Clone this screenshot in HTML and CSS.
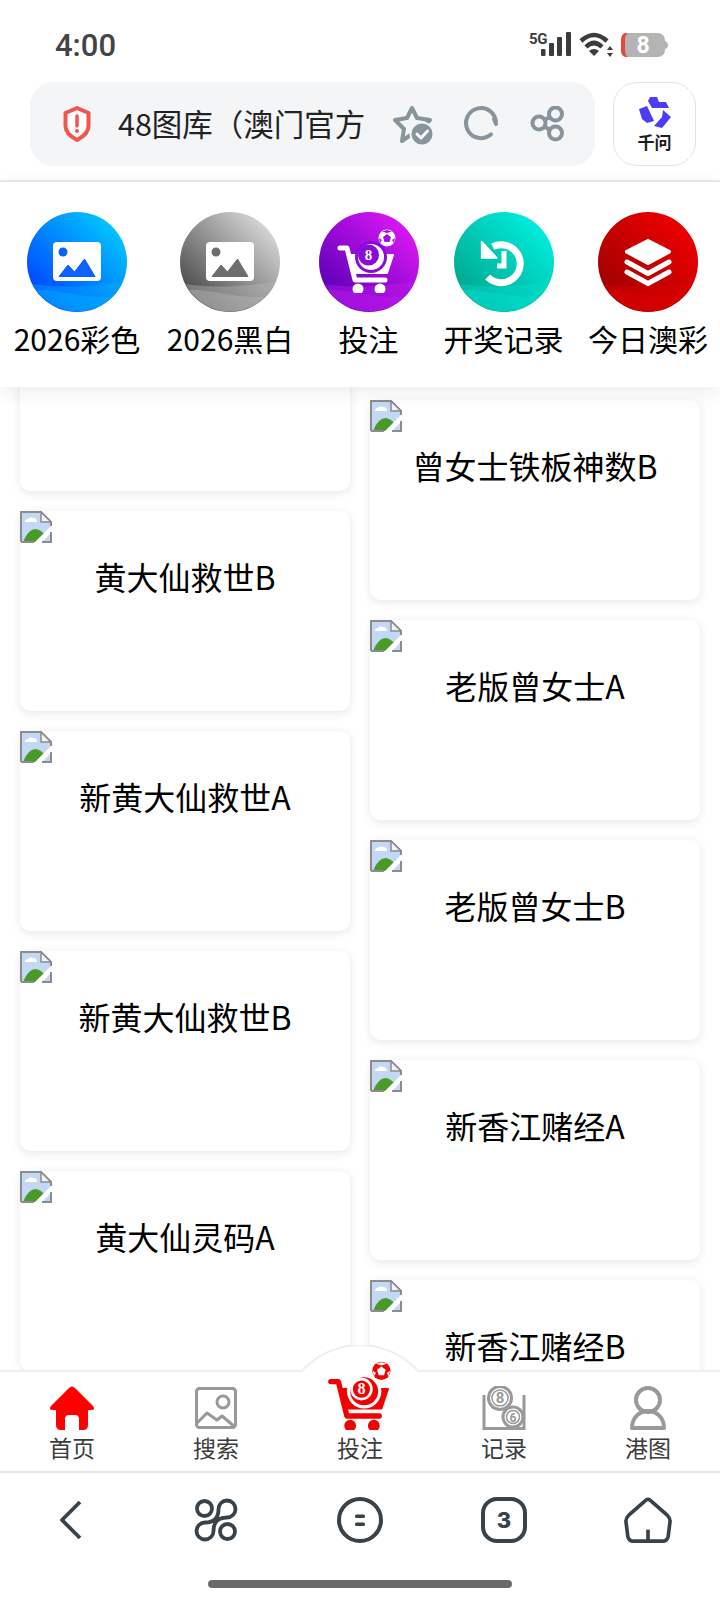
FILE: index.html
```html
<!DOCTYPE html>
<html lang="zh-CN">
<head>
  <meta charset="UTF-8">
  <meta name="viewport" content="width=device-width, initial-scale=1.0">
  <title>48图库</title>
  <link rel="stylesheet" href="styles.css">
</head>
<body>
  <!-- shared gradients and symbols -->
  <svg class="defs" aria-hidden="true">
    <defs>
      <linearGradient id="g-blue" x1="0" y1="1" x2="1" y2="0"><stop offset="0.15" stop-color="#0048ff"/><stop offset="0.9" stop-color="#00ccff"/></linearGradient>
      <linearGradient id="g-gray" x1="0" y1="1" x2="1" y2="0"><stop offset="0.15" stop-color="#4e4e4e"/><stop offset="0.9" stop-color="#dcdcdc"/></linearGradient>
      <linearGradient id="g-purple" x1="0" y1="1" x2="1" y2="0"><stop offset="0.15" stop-color="#5c00b8"/><stop offset="0.9" stop-color="#e018f5"/></linearGradient>
      <linearGradient id="g-green" x1="0" y1="1" x2="1" y2="0"><stop offset="0.15" stop-color="#00a98f"/><stop offset="0.9" stop-color="#00f0e2"/></linearGradient>
      <linearGradient id="g-red" x1="0" y1="1" x2="1" y2="0"><stop offset="0.15" stop-color="#a00000"/><stop offset="0.8" stop-color="#e80000"/></linearGradient>
      <clipPath id="disc-clip"><circle cx="50" cy="50" r="49.500"/></clipPath>

      <symbol id="waves" viewBox="0 0 100 100">
        <g clip-path="url(#disc-clip)">
          <path d="M0 71C25 76 55 76 100 69V100H0Z" fill="var(--wave)" opacity=".4"/>
          <path d="M0 78C30 76 55 86 78 85C86 85 92 84 100 80V100H0Z" fill="var(--wave)" opacity=".4"/>
        </g>
      </symbol>

      <symbol id="picture" viewBox="0 0 100 100">
        <rect x="26" y="30" width="48" height="39" rx="4" fill="#fff"/>
        <circle cx="36" cy="40" r="4.5" fill="currentColor"/>
        <path d="M32 64.5L41 53L47.500 60L57.500 47L68 64.500Z" fill="currentColor" stroke="currentColor" stroke-linejoin="round"/>
      </symbol>

      <symbol id="cart" viewBox="15 15 70 66">
        <path d="M21 36H28L36 68H66" fill="none" stroke="currentColor" stroke-width="5" stroke-linecap="round" stroke-linejoin="round"/>
        <path d="M30 43H74L68 61H36Z" fill="currentColor" stroke="currentColor" stroke-width="2" stroke-linejoin="round"/>
        <circle cx="39" cy="77" r="4" fill="currentColor" stroke="currentColor" stroke-width="3"/>
        <circle cx="61" cy="77" r="4" fill="currentColor" stroke="currentColor" stroke-width="3"/>
        <circle cx="52" cy="45" r="16" fill="var(--cut)"/>
        <circle cx="52" cy="45" r="13" fill="currentColor"/>
        <circle cx="49.500" cy="43" r="10.500" fill="var(--cut)"/>
        <circle cx="49.500" cy="43" r="8" fill="var(--ball)"/>
        <text x="49.500" y="48" class="ball-num">8</text>
        <circle cx="68" cy="26" r="8.500" fill="var(--soccer)"/>
        <path d="M68 22L72 25L70.500 30H65.500L64 25Z" fill="var(--spot)"/>
        <path d="M63 19.500L68 18L73 19.500L68 21ZM60 26L61 31L63 28ZM76 26L75 31L73 28Z" fill="var(--spot)"/>
      </symbol>

      <symbol id="broken" viewBox="0 0 32 32">
        <path d="M1 1H21L31 11V31H1Z" fill="#c2d8f5"/>
        <path d="M5 11Q5 8 8 8Q10 5 13 7Q17 7 17 11Z" fill="#fff"/>
        <path d="M3 31Q8 18 16 18Q21 19 24 23L16 31Z" fill="#4a9a28"/>
        <path d="M14 32L32 14V21L21 32Z" fill="#fff"/>
        <path d="M1 31V1H21L31 11V15M1 31H14M22 31H31V21" fill="none" stroke="#8c8c8c" stroke-width="2"/>
        <path d="M21 1V11H31Z" fill="#f2f2f2" stroke="#8c8c8c" stroke-width="1.500"/>
      </symbol>
    </defs>
  </svg>

  <header class="top">
    <div class="status">
      <span class="clock">4:00</span>
      <div class="status-icons">
        <svg class="ic-signal" viewBox="0 -4 42 34">
          <text x="0" y="12" class="net">5G</text>
          <rect x="12" y="17" width="4.500" height="7" rx="1"/>
          <rect x="20" y="11" width="5" height="13" rx="1"/>
          <rect x="28" y="5" width="5" height="19" rx="1"/>
          <rect x="37" y="0" width="5" height="24" rx="1"/>
        </svg>
        <svg class="ic-wifi" viewBox="0 0 34 26">
          <path d="M2 9Q15 -3 28 9M7 15Q15 7 23 15" fill="none" stroke="#3c3c3c" stroke-width="4.500"/>
          <path d="M10 19Q15 15 20 19L15 24Z" fill="#3c3c3c"/>
          <path d="M31 14L34 18H28ZM31 25L28 21H34Z" fill="#3c3c3c"/>
        </svg>
        <svg class="ic-battery" viewBox="0 0 47 26">
          <rect x="0" y="1" width="44" height="24" rx="7" fill="#b4b4b4"/>
          <path d="M7 1H4.500Q0 2 0 8V18Q0 24 4.500 25H7Q4 23 4 18V8Q4 3 7 1Z" fill="#e8483c"/>
          <path d="M44 9Q47 10 47 13Q47 16 44 17Z" fill="#b4b4b4"/>
          <text x="22" y="21" class="batt">8</text>
        </svg>
      </div>
    </div>

    <div class="address-row">
      <div class="address">
        <svg class="ic-shield" viewBox="0 0 28 36">
          <path d="M14 2L25.500 7V20Q25.500 28 14 34Q2.500 28 2.500 20V7Z" fill="#fff" stroke="#f0564f" stroke-width="4" stroke-linejoin="round"/>
          <path d="M14 10V20" stroke="#f0564f" stroke-width="3.500" stroke-linecap="round"/>
          <circle cx="14" cy="25" r="2" fill="#f0564f"/>
        </svg>
        <span class="page-title">48图库（澳门官方</span>
        <svg class="ic-star" viewBox="0 0 46 46">
          <path d="M22 7L27 17L40 19L31 28L33 38L22 33L12 40L14 28L5 19L17 17Z" fill="none" stroke="#87949b" stroke-width="4" stroke-linejoin="round"/>
          <circle cx="32" cy="33" r="11.500" fill="#87949b" stroke="#f4f5f7" stroke-width="2"/>
          <path d="M27 33L31 37L37.500 30" fill="none" stroke="#fff" stroke-width="3" stroke-linecap="round" stroke-linejoin="round"/>
        </svg>
        <svg class="ic-reload" viewBox="0 0 40 40">
          <path d="M30 30.300A15 15 0 1 1 35 20L33 15" fill="none" stroke="#87949b" stroke-width="4" stroke-linecap="round" stroke-linejoin="round"/>
        </svg>
        <svg class="ic-share" viewBox="0 0 36 36">
          <g fill="none" stroke="#87949b" stroke-width="4">
            <circle cx="10" cy="17" r="6.500"/>
            <circle cx="26.500" cy="8" r="6.500"/>
            <circle cx="26.500" cy="27" r="6.500"/>
            <path d="M15.500 14L21 11M15.500 20.500L21 24"/>
          </g>
        </svg>
      </div>
      <div class="ask">
        <svg class="ic-ask" viewBox="0 0 32 32">
          <g fill="#4a3df5">
            <path d="M11 0H18L20 5H27L30 11H13L9 4Z"/>
            <path d="M24 13L32 20L23 31L15 29L23 20Z"/>
            <path d="M0 12L8 9L15 24L8 26L3 22Z"/>
          </g>
        </svg>
        <span class="ask-label">千问</span>
      </div>
    </div>
  </header>

  <nav class="shortcuts">
    <a class="shortcut">
      <svg class="disc disc-blue" viewBox="0 0 100 100">
        <circle cx="50" cy="50" r="50" fill="url(#g-blue)"/>
        <use href="#waves"/><use href="#picture"/>
      </svg>
      <span>2026彩色</span>
    </a>
    <a class="shortcut">
      <svg class="disc disc-gray" viewBox="0 0 100 100">
        <circle cx="50" cy="50" r="50" fill="url(#g-gray)"/>
        <use href="#waves"/><use href="#picture"/>
      </svg>
      <span>2026黑白</span>
    </a>
    <a class="shortcut">
      <svg class="disc disc-cart" viewBox="0 0 100 100">
        <circle cx="50" cy="50" r="50" fill="url(#g-purple)"/>
        <use href="#waves"/>
        <use href="#cart" x="15" y="15" width="70" height="66"/>
      </svg>
      <span>投注</span>
    </a>
    <a class="shortcut">
      <svg class="disc disc-green" viewBox="0 0 100 100">
        <circle cx="50" cy="50" r="50" fill="url(#g-green)"/>
        <use href="#waves"/>
        <path d="M38.700 34.700A19 19 0 1 1 33.700 65" fill="none" stroke="#fff" stroke-width="7"/>
        <path d="M27.600 29.600V46H43Z" fill="#fff" stroke="#fff" stroke-width="1.500" stroke-linejoin="round"/>
        <path d="M50 39V54H43" fill="none" stroke="#fff" stroke-width="5"/>
      </svg>
      <span>开奖记录</span>
    </a>
    <a class="shortcut">
      <svg class="disc disc-red" viewBox="0 0 100 100">
        <circle cx="50" cy="50" r="50" fill="url(#g-red)"/>
        <use href="#waves"/>
        <path d="M50 29L71 39.700L50 51L29 39.700Z" fill="#fff" stroke="#fff" stroke-width="4" stroke-linejoin="round"/>
        <path d="M29 50L50 61.500L71 50M29 60L50 71.500L71 60" fill="none" stroke="#fff" stroke-width="5" stroke-linecap="round" stroke-linejoin="round"/>
      </svg>
      <span>今日澳彩</span>
    </a>
  </nav>

  <main class="feed">
    <div class="col col-left">
      <article class="card"></article>
      <article class="card"><svg class="broken"><use href="#broken"/></svg><h3>黄大仙救世B</h3></article>
      <article class="card"><svg class="broken"><use href="#broken"/></svg><h3>新黄大仙救世A</h3></article>
      <article class="card"><svg class="broken"><use href="#broken"/></svg><h3>新黄大仙救世B</h3></article>
      <article class="card"><svg class="broken"><use href="#broken"/></svg><h3>黄大仙灵码A</h3></article>
    </div>
    <div class="col col-right">
      <article class="card"><svg class="broken"><use href="#broken"/></svg><h3>曾女士铁板神数B</h3></article>
      <article class="card"><svg class="broken"><use href="#broken"/></svg><h3>老版曾女士A</h3></article>
      <article class="card"><svg class="broken"><use href="#broken"/></svg><h3>老版曾女士B</h3></article>
      <article class="card"><svg class="broken"><use href="#broken"/></svg><h3>新香江赌经A</h3></article>
      <article class="card"><svg class="broken"><use href="#broken"/></svg><h3>新香江赌经B</h3></article>
    </div>
  </main>

  <nav class="tabbar">
    <svg class="bump" viewBox="0 0 120 28">
      <path d="M3 25A77.500 77.500 0 0 1 117 25V28H3Z" fill="#fff"/>
      <path d="M3 25A77.500 77.500 0 0 1 117 25" fill="none" stroke="#eeeeee" stroke-width="2"/>
    </svg>
    <a class="tab">
      <span class="tab-icon">
        <svg class="ic-tab" viewBox="0 0 44 44">
          <path d="M19 2Q22 -1 25 2L43 20Q46 24 41 24H38V39Q38 44 33 44H29V33Q29 29 25 29H19Q15 29 15 33V44H11Q6 44 6 39V24H3Q-2 24 1 20Z" fill="#ff0000"/>
        </svg>
      </span>
      <span class="tab-label">首页</span>
    </a>
    <a class="tab">
      <span class="tab-icon">
        <svg class="ic-tab" viewBox="0 0 44 44">
          <g fill="none" stroke="#999" stroke-width="3">
            <rect x="2.500" y="2.500" width="39" height="39" rx="3"/>
            <circle cx="29" cy="16" r="6"/>
            <path d="M3 37L13 27L23 34L28 30L41 41" stroke-linejoin="round"/>
          </g>
        </svg>
      </span>
      <span class="tab-label">搜索</span>
    </a>
    <a class="tab">
      <span class="tab-icon">
        <svg class="ic-bet"><use href="#cart"/></svg>
      </span>
      <span class="tab-label">投注</span>
    </a>
    <a class="tab">
      <span class="tab-icon">
        <svg class="ic-tab" viewBox="0 0 44 44">
          <path d="M2 9V42.500H42V9" fill="none" stroke="#999" stroke-width="3"/>
          <circle cx="18" cy="12" r="11.500" fill="#fff" stroke="#999" stroke-width="3"/>
          <circle cx="18" cy="12" r="8" fill="none" stroke="#999" stroke-width="1.500"/>
          <circle cx="31" cy="31" r="10" fill="#fff" stroke="#999" stroke-width="3"/>
          <circle cx="31" cy="31" r="6.500" fill="none" stroke="#999" stroke-width="1.500"/>
          <text x="18" y="17" class="mini-num big">8</text>
          <text x="31" y="35.500" class="mini-num">6</text>
        </svg>
      </span>
      <span class="tab-label">记录</span>
    </a>
    <a class="tab">
      <span class="tab-icon">
        <svg class="ic-tab" viewBox="0 0 44 44">
          <circle cx="22" cy="14" r="12" fill="none" stroke="#999" stroke-width="4"/>
          <path d="M6 42C6 31 14 25 22 25C30 25 38 31 38 42Z" fill="none" stroke="#999" stroke-width="4" stroke-linejoin="round"/>
        </svg>
      </span>
      <span class="tab-label">港图</span>
    </a>
  </nav>

  <footer class="browser">
    <div class="browser-row">
      <svg class="ic-tool" viewBox="0 0 50 50">
        <path d="M33 7L15 25L33 43" fill="none" stroke="#37424a" stroke-width="3.800" stroke-linejoin="round"/>
      </svg>
      <svg class="ic-tool" viewBox="-3 -3 50 50">
        <g fill="none" stroke="#37424a" stroke-width="3.800">
          <circle cx="10.500" cy="10.500" r="7.500"/>
          <circle cx="33.500" cy="33.500" r="7.500"/>
          <path d="M11 24.500C20 24.500 24.500 20 24.500 11A8.500 8.500 0 1 1 33 19.500C24 19.500 19.500 24 19.500 33A8.500 8.500 0 1 1 11 24.500Z"/>
        </g>
      </svg>
      <svg class="ic-tool" viewBox="0 0 50 50">
        <circle cx="25" cy="25" r="21" fill="none" stroke="#37424a" stroke-width="4"/>
        <rect x="20" y="19.500" width="10" height="3.500" rx="1.500" fill="#37424a"/>
        <rect x="20" y="27.500" width="10" height="3.500" rx="1.500" fill="#37424a"/>
      </svg>
      <svg class="ic-tool" viewBox="0 0 50 50">
        <rect x="4" y="4" width="42" height="42" rx="14" fill="none" stroke="#37424a" stroke-width="4"/>
        <text x="25" y="32.500" class="tab-count">3</text>
      </svg>
      <svg class="ic-tool" viewBox="-1 -1 52 52">
        <path d="M22 5Q25 2 28 5L45 20Q48 23 48 26L46 42Q45 47 40 47H10Q5 47 4 42L2 26Q2 23 5 20Z" fill="none" stroke="#37424a" stroke-width="3.800" stroke-linejoin="round"/>
        <path d="M25 47V35" stroke="#37424a" stroke-width="3.800"/>
      </svg>
    </div>
    <div class="home-bar"></div>
  </footer>
</body>
</html>
```

FILE: styles.css
```css
* {
  box-sizing: border-box;
}

html, body {
  margin: 0;
  height: 1600px;
}

body {
  display: flex;
  flex-direction: column;
  overflow: hidden;
  background-color: #fff;
  color: #000;
  font-family: "Noto Sans CJK SC", "Noto Sans", sans-serif;
}

svg {
  display: block;
}

.defs {
  position: absolute;
  width: 0;
  height: 0;
}

/* top: status bar and address bar */
.top {
  flex: none;
  height: 182px;
  border-bottom: 2px solid #e6ebeb;
}

.status {
  display: flex;
  justify-content: space-between;
  align-items: center;
  height: 82px;
  padding: 8px 52px 0 55px;
}

.clock {
  font-family: Roboto, sans-serif;
  font-size: 31px;
  font-weight: 500;
  color: #444;
}

.status-icons {
  display: flex;
  align-items: center;
  gap: 8px;
}

.status-icons svg {
  height: 26px;
}

.status-icons .ic-signal {
  width: 42px;
  height: 34px;
  fill: #3c3c3c;
}

.ic-wifi {
  width: 34px;
}

.ic-battery {
  width: 47px;
}

.net {
  font-family: Roboto, sans-serif;
  font-size: 15px;
  font-weight: 700;
  letter-spacing: -0.3px;
}

.batt {
  font-family: Roboto, sans-serif;
  font-size: 23px;
  font-weight: 700;
  text-anchor: middle;
  fill: #fff;
}

.address-row {
  display: flex;
  gap: 18px;
  padding: 0 24px 0 30px;
}

.address {
  display: flex;
  align-items: center;
  width: 565px;
  height: 84px;
  padding: 0 30px 0 33px;
  border-radius: 24px;
  background-color: #f4f5f7;
}

.ic-shield {
  flex: none;
  width: 28px;
  height: 36px;
}

.page-title {
  flex: 1;
  min-width: 0;
  margin: -2px 0 0 27px;
  overflow: hidden;
  white-space: nowrap;
  font-size: 30.5px;
  color: #222;
}

.ic-star {
  flex: none;
  width: 46px;
  height: 46px;
}

.ic-reload {
  flex: none;
  width: 40px;
  height: 40px;
  margin-left: 25px;
}

.ic-share {
  flex: none;
  width: 36px;
  height: 36px;
  margin-left: 28px;
}

.ask {
  display: flex;
  flex-direction: column;
  align-items: center;
  width: 83px;
  height: 84px;
  padding-top: 14px;
  border: 1.5px solid #e0e6e8;
  border-radius: 24px;
}

.ic-ask {
  width: 32px;
  height: 32px;
}

.ask-label {
  font-size: 17px;
  font-weight: 700;
  line-height: 26px;
  color: #1c1c1c;
}

/* round shortcuts */
.shortcuts {
  position: relative;
  z-index: 1;
  flex: none;
  display: grid;
  grid-template-columns: 154px 152px 125px 145px 144px;
  justify-items: center;
  height: 205px;
  padding-top: 30px;
  background-color: #fff;
  box-shadow: 0 4px 20px rgba(0, 0, 0, 0.08);
}

.shortcut {
  display: flex;
  flex-direction: column;
  align-items: center;
  font-size: 30px;
  line-height: 40px;
  white-space: nowrap;
}

.shortcut span {
  margin-top: 6px;
}

.disc {
  width: 100px;
  height: 100px;
}

.disc-blue {
  color: #0a62ff;
  --wave: #00b4ff;
}

.disc-gray {
  color: #6e6e6e;
  --wave: #b8b8b8;
}

.disc-green {
  --wave: #00e2d2;
}

.disc-red {
  --wave: #e60000;
}

.disc-cart {
  color: #fff;
  --wave: #c818f0;
  --cut: #8a0cd8;
  --ball: #8a0cd8;
  --soccer: #fff;
  --spot: #a010e0;
}

.ball-num {
  font-family: "Liberation Serif", serif;
  font-size: 15px;
  font-weight: 700;
  text-anchor: middle;
  fill: var(--num, #fff);
}

/* two column list */
.feed {
  flex: 1;
  min-height: 0;
  display: grid;
  grid-template-columns: 1fr 1fr;
  gap: 20px;
  padding: 0 20px;
  overflow: hidden;
}

.col {
  display: flex;
  flex-direction: column;
  gap: 20px;
}

.col-left {
  margin-top: -96px;
}

.col-right {
  margin-top: 13px;
}

.card {
  flex: none;
  height: 200px;
  border-radius: 10px;
  background-color: #fff;
  box-shadow: 0 2px 10px rgba(0, 0, 0, 0.1);
  text-align: center;
}

.broken {
  width: 32px;
  height: 32px;
}

.card h3 {
  margin: 11px 0 0;
  font-size: 32px;
  font-weight: 400;
  line-height: 44px;
}

/* bottom tabs */
.tabbar {
  position: relative;
  z-index: 2;
  flex: none;
  display: grid;
  grid-template-columns: repeat(5, 1fr);
  height: 101px;
  padding-top: 14px;
  border-top: 2px solid #eee;
  background-color: #fff;
}

.bump {
  position: absolute;
  top: -27px;
  left: 300px;
  width: 120px;
  height: 28px;
}

.tab {
  position: relative;
  display: flex;
  flex-direction: column;
  align-items: center;
}

.tab-icon {
  display: flex;
  justify-content: center;
  align-items: flex-end;
  height: 44px;
}

.ic-tab {
  width: 44px;
  height: 44px;
}

.ic-bet {
  width: 76px;
  height: 71px;
  flex: none;
  margin-left: 4px;
  color: #f50000;
  --cut: #fff;
  --ball: #f50000;
  --soccer: #f50000;
  --spot: #fff;
}

.tab-label {
  margin-top: 4px;
  font-size: 23px;
  line-height: 26px;
  color: #3c3c3c;
}

.mini-num {
  font-family: Roboto, sans-serif;
  font-size: 12px;
  font-weight: 700;
  text-anchor: middle;
  fill: #999;
}

.mini-num.big {
  font-size: 15px;
}

/* browser toolbar */
.browser {
  flex: none;
  height: 129px;
  border-top: 2px solid #e4e4e4;
  background-color: #fff;
}

.browser-row {
  display: grid;
  grid-template-columns: repeat(5, 1fr);
  justify-items: center;
  align-items: center;
  height: 94px;
}

.ic-tool {
  width: 50px;
  height: 50px;
}

.tab-count {
  font-family: Inter, sans-serif;
  font-size: 22px;
  font-weight: 800;
  text-anchor: middle;
  fill: #37424a;
}

.home-bar {
  width: 304px;
  height: 8px;
  margin: 13px auto 0;
  border-radius: 4px;
  background-color: #6b6b6b;
}
```
